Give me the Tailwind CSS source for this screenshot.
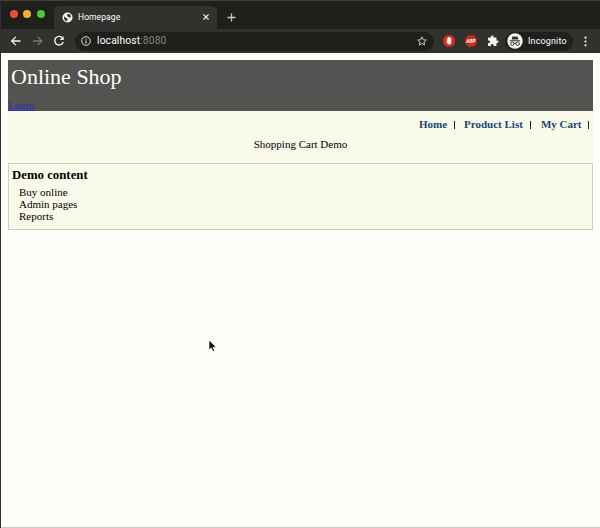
<!DOCTYPE html>
<html lang="en">
<head>
<meta charset="utf-8">
<title>Homepage</title>
<script src="https://cdn.jsdelivr.net/npm/@tailwindcss/browser@4"></script>
</head>
<body class="w-[600px] h-[528px] overflow-hidden bg-[#fefefb] text-black">
<div class="flex flex-col w-[600px] h-[528px] border-l border-[#303030]">
  <header class="bg-[#1f1f1c] border-t border-[#424238] h-[53px] shrink-0 font-['Roboto',sans-serif] text-white">
    <div class="flex h-[28px] pt-[5px]">
      <div class="flex gap-[5.6px] pl-[8.5px] pt-[4px] w-[53px]">
        <span class="size-[8px] rounded-full bg-[#f0483e]"></span>
        <span class="size-[8px] rounded-full bg-[#f5ae2d]"></span>
        <span class="size-[8px] rounded-full bg-[#4bc935]"></span>
      </div>
      <div class="flex items-center w-[163px] h-[23px] rounded-t-[5px] bg-[#31312e] pl-[8px] pr-[7px]">
        <svg class="size-[11px] shrink-0" viewBox="0 0 11 11"><circle cx="5.5" cy="5.5" r="5" fill="#f2f2f2"/><path d="M2 4.2 4 6.1 5.6 6.6 5.4 8.2 4.4 9.2Q1.6 8 2 4.2M5.5 1.8 8 2.4 9 4.5 7.8 6 6.6 4.7 5.1 4.2Z" fill="#30302c"/></svg>
        <span class="ml-[5px] -mt-[1px] text-[8.5px] leading-[12px] tracking-[.01em]">Homepage</span>
        <svg class="ml-auto -mt-[1px] size-[8px]" viewBox="0 0 8 8" stroke="#f1f1f1" stroke-width="1.3"><path d="M1.4 1.4 6.6 6.6M6.6 1.4 1.4 6.6"/></svg>
      </div>
      <svg class="ml-[10px] mt-[7px] size-[9px]" viewBox="0 0 9 9" stroke="#c8c8c0" stroke-width="1.3"><path d="M4.5 .5V8.5M.5 4.5H8.5"/></svg>
    </div>
    <div class="flex items-center h-[24px] bg-[#31312e]">
      <svg class="ml-[9px] size-[12px]" viewBox="0 0 12 12" fill="none" stroke="#f2f2f2" stroke-width="1.3"><path d="M10.5 6H1.8M5.8 1.9 1.7 6 5.8 10.1"/></svg>
      <svg class="ml-[10px] size-[12px]" viewBox="0 0 12 12" fill="none" stroke="#777774" stroke-width="1.3"><path d="M1 6H9.7M5.7 1.9 9.8 6 5.7 10.1"/></svg>
      <svg class="ml-[9px] size-[12px]" viewBox="0 0 12 12" fill="none" stroke="#f2f2f2" stroke-width="1.4"><path d="M9.6 3.2A4.3 4.3 0 1 0 10.2 7"/><path d="M10.7 1V5H6.7Z" fill="#f2f2f2" stroke="none"/></svg>
      <div class="ml-[10px] flex items-center w-[359px] h-[19px] rounded-full bg-[#1f1f1c] pl-[6px] pr-[7px]">
        <svg class="size-[10px]" viewBox="0 0 10 10" fill="none" stroke="#ddd"><circle cx="5" cy="5" r="4.3"/><path d="M5 4.4V7.5M5 2.4V3.5" stroke-width="1.2"/></svg>
        <span class="ml-[6px] text-[10.3px] leading-[14px] tracking-[.012em]">localhost<span class="text-[#85857f]">:8080</span></span>
        <svg class="ml-auto size-[10px]" viewBox="0 0 10 10" fill="none" stroke="#d6d6ce" stroke-width=".9"><path d="M5 .9 6.2 3.7 9.2 4 6.9 6 7.6 9 5 7.4 2.4 9 3.1 6 .8 4 3.8 3.7Z"/></svg>
      </div>
      <svg class="ml-[9px] size-[12px]" viewBox="0 0 12 12"><path d="M3.5 .3H8.5L11.7 3.5V8.5L8.5 11.7H3.5L.3 8.5V3.5Z" fill="#e32b1d"/><path d="M3.4 5.4 4.2 6.2V3H5V2.2H5.8V2H6.6V2.5H7.4V3.2H8.2V7.8Q7.8 9.5 6.1 9.5 4.5 9.3 3.2 6.2Z" fill="#fff"/></svg>
      <svg class="ml-[10px] size-[12px]" viewBox="0 0 12 12"><path d="M3.5 .3H8.5L11.7 3.5V8.5L8.5 11.7H3.5L.3 8.5V3.5Z" fill="#cf291d"/><text x="6" y="7.8" text-anchor="middle" font-family="Roboto" font-size="4.9" font-weight="700" font-style="italic" fill="#fff">ABP</text></svg>
      <svg class="ml-[10px] size-[12px]" viewBox="0 0 24 24" fill="#f5f5f5"><path d="M20.5 11H19V7c0-1.1-.9-2-2-2h-4V3.5a2.5 2.5 0 0 0-5 0V5H4a2 2 0 0 0-2 2v3.8h1.5a2.7 2.7 0 0 1 0 5.4H2V20c0 1.1.9 2 2 2h3.8v-1.5a2.7 2.7 0 0 1 5.4 0V22H17a2 2 0 0 0 2-2v-4h1.5a2.5 2.5 0 0 0 0-5z"/></svg>
      <div class="ml-[6px] flex items-center w-[68px] h-[19px] rounded-full bg-[#1f1f1c] pl-[2px]">
        <svg class="size-[16px] shrink-0" viewBox="0 0 16 16"><circle cx="8" cy="8" r="7.7" fill="#f8f8f8"/><path d="M4.6 6.5 5.5 3.3 8 3.8 10.5 3.3 11.4 6.5ZM2.8 7.2H13.2V8.2H2.8Z" fill="#30302c"/><g fill="none" stroke="#30302c"><circle cx="5.3" cy="10.7" r="1.7"/><circle cx="10.7" cy="10.7" r="1.7"/><path d="M7 10.5Q8 9.8 9 10.5"/></g></svg>
        <span class="ml-[5px] text-[9px] leading-[12px] tracking-[.015em]">Incognito</span>
      </div>
      <svg class="ml-[7px] size-[11px]" viewBox="0 0 11 11" fill="#f0f0f0"><circle cx="5.5" cy="1.7" r="1.1"/><circle cx="5.5" cy="5.5" r="1.1"/><circle cx="5.5" cy="9.3" r="1.1"/></svg>
    </div>
  </header>
  <main class="flex-1 pt-[7px] pl-[7px] pr-[7px] border-b border-[#c8c8c2] font-['Liberation_Serif',serif]">
    <div class="h-[51px] bg-[#535351] flex flex-col justify-between">
      <h1 class="pl-[3px] pt-[4px] text-[22px] leading-[25px] text-[#fffff5]">Online Shop</h1>
      <a href="#" class="self-start text-[11px] leading-[11px] text-[#2c2cc8] underline">Login</a>
    </div>
    <div class="h-[119px] bg-[#fafaea]">
      <nav class="flex justify-end items-center h-[27px] pr-[4px] text-[11px] font-bold text-[#174774]">
        <a>Home</a><span class="mx-[6.5px] w-px h-[8px] bg-[#222]"></span>
        <a class="ml-[3px]">Product List</a><span class="mx-[7px] w-px h-[8px] bg-[#222]"></span>
        <a class="ml-[3px]">My Cart</a><span class="ml-[6.5px] w-px h-[8px] bg-[#222]"></span>
      </nav>
      <p class="h-[25px] text-center text-[11px] leading-[12px]">Shopping Cart Demo</p>
      <section class="h-[67px] border border-[#cfcfc0] pl-[3px] pt-[4px]">
        <h2 class="text-[12.8px] leading-[14px] font-bold">Demo content</h2>
        <ul class="pl-[7px] pt-[4px] text-[11px] leading-[12px]"><li>Buy online</li><li>Admin pages</li><li>Reports</li></ul>
      </section>
    </div>
  </main>
</div>
<svg class="absolute left-[208px] top-[339px] w-[9px] h-[14px]" viewBox="0 0 9 14"><path d="M1 1V11L3.3 8.9 4.9 12.6 6.6 11.8 5.1 8.2H8.3Z" fill="#111" stroke="#fff" stroke-width=".7"/></svg>
</body>
</html>
